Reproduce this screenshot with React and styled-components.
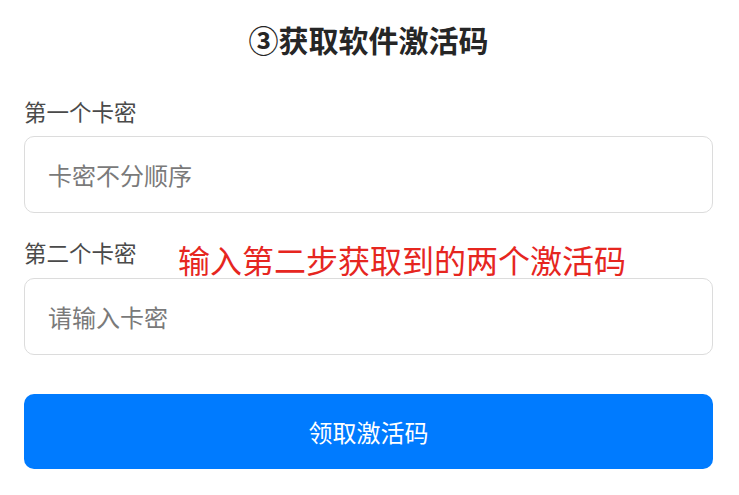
import React from "react";
import styled, { createGlobalStyle } from "styled-components";

const GlobalStyle = createGlobalStyle`
  html, body {
    margin: 0;
    padding: 0;
    background: #fff;
  }
  body {
    font-family: "Noto Sans CJK SC", "Noto Sans", sans-serif;
  }
`;

const Page = styled("div")`
  width: 739px;
  box-sizing: border-box;
  padding: 18px 26px 0 24px;
`;

const Title = styled("h2")`
  margin: 0 0 36px;
  text-align: center;
  font-size: 30px;
  line-height: 42px;
  font-weight: 700;
  color: #262626;
`;

const Field = styled("div")`
  position: relative;
  margin-bottom: ${(p) => p.gap}px;
`;

const Label = styled("div")`
  font-size: 22.5px;
  line-height: 30px;
  color: #4a4a4a;
  margin-bottom: ${(p) => p.gap}px;
`;

const Input = styled("input")`
  display: block;
  width: 100%;
  height: 77px;
  box-sizing: border-box;
  padding: 0 23px;
  border: 1px solid #dcdcdc;
  border-radius: 10px;
  font-family: inherit;
  font-size: 24px;
  color: #333;
  outline: none;
  &::placeholder {
    color: #7a7a7a;
  }
`;

const Note = styled("span")`
  position: absolute;
  left: 154px;
  top: 6px;
  font-size: 32px;
  line-height: 1;
  color: #e6261f;
  white-space: nowrap;
`;

const Button = styled("button")`
  display: block;
  width: 100%;
  height: 75px;
  border: none;
  border-radius: 10px;
  background: #007bff;
  color: #fff;
  font-family: inherit;
  font-size: 24px;
  cursor: pointer;
`;

export default function App() {
  return (
    <>
      <GlobalStyle />
      <Page>
        <Title>③获取软件激活码</Title>
        <Field gap={24}>
          <Label gap={10}>第一个卡密</Label>
          <Input placeholder="卡密不分顺序" />
        </Field>
        <Field gap={39}>
          <Label gap={11}>第二个卡密</Label>
          <Input placeholder="请输入卡密" />
          <Note>输入第二步获取到的两个激活码</Note>
        </Field>
        <Button>领取激活码</Button>
      </Page>
    </>
  );
}
